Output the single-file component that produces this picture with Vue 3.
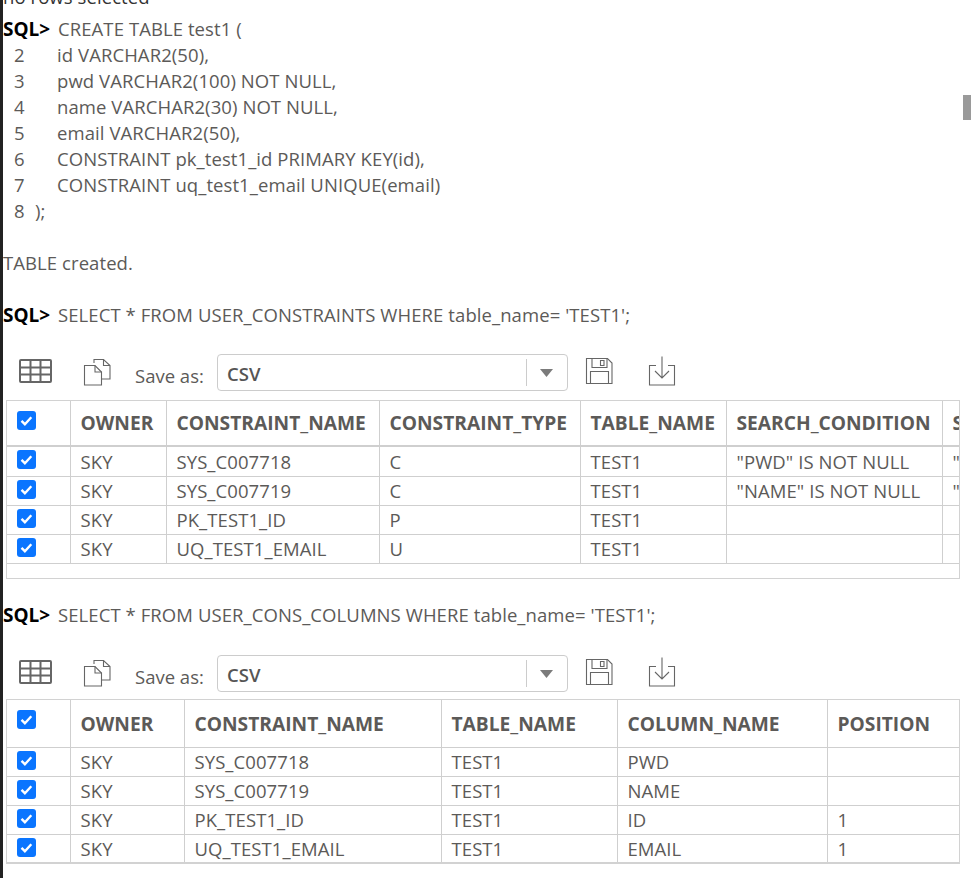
<script setup>
const lines = [
  ['2', 'id VARCHAR2(50),'],
  ['3', 'pwd VARCHAR2(100) NOT NULL,'],
  ['4', 'name VARCHAR2(30) NOT NULL,'],
  ['5', 'email VARCHAR2(50),'],
  ['6', 'CONSTRAINT pk_test1_id PRIMARY KEY(id),'],
  ['7', 'CONSTRAINT uq_test1_email UNIQUE(email)'],
]
const results = [
  {
    sql: "SELECT * FROM USER_CONSTRAINTS WHERE table_name= 'TEST1';",
    kind: 'first',
    cols: [63, 96, 213, 201, 146, 216, 41],
    head: ['OWNER', 'CONSTRAINT_NAME', 'CONSTRAINT_TYPE', 'TABLE_NAME', 'SEARCH_CONDITION', 'SEARCH_CONDITION_VC'],
    rows: [
      ['SKY', 'SYS_C007718', 'C', 'TEST1', '"PWD" IS NOT NULL', '"PWD" IS NOT NULL'],
      ['SKY', 'SYS_C007719', 'C', 'TEST1', '"NAME" IS NOT NULL', '"NAME" IS NOT NULL'],
      ['SKY', 'PK_TEST1_ID', 'P', 'TEST1', '', ''],
      ['SKY', 'UQ_TEST1_EMAIL', 'U', 'TEST1', '', ''],
    ],
  },
  {
    sql: "SELECT * FROM USER_CONS_COLUMNS WHERE table_name= 'TEST1';",
    kind: 'second',
    cols: [63, 114, 257, 176, 210, 132],
    head: ['OWNER', 'CONSTRAINT_NAME', 'TABLE_NAME', 'COLUMN_NAME', 'POSITION'],
    rows: [
      ['SKY', 'SYS_C007718', 'TEST1', 'PWD', ''],
      ['SKY', 'SYS_C007719', 'TEST1', 'NAME', ''],
      ['SKY', 'PK_TEST1_ID', 'TEST1', 'ID', '1'],
      ['SKY', 'UQ_TEST1_EMAIL', 'TEST1', 'EMAIL', '1'],
    ],
  },
]
</script>

<template>
  <div class="page">
    <div class="thumb"></div>
    <div class="line cut">no rows selected</div>
    <div class="line gap-top"><b class="prompt">SQL&gt;</b><span>CREATE TABLE test1 (</span></div>
    <div v-for="l in lines" :key="l[0]" class="line"><span class="num">{{ l[0] }}</span><span>{{ l[1] }}</span></div>
    <div class="line"><span class="num short">8</span><span>);</span></div>
    <div class="line created">TABLE created.</div>

    <section v-for="r in results" :key="r.kind" :class="['result', r.kind]">
      <div class="line"><b class="prompt">SQL&gt;</b><span>{{ r.sql }}</span></div>
      <div class="toolbar">
        <svg class="ic-grid" width="34" height="24" viewBox="0 0 34 24" fill="none" stroke="#666" stroke-width="2">
          <rect x="1" y="1" width="31" height="22" rx="1"/>
          <path d="M1 8.500h31M1 15.500h31M11.500 1v22M21.500 1v22"/>
        </svg>
        <svg class="ic-copy" width="28" height="28" viewBox="0 0 28 28" fill="none" stroke="#666" stroke-width="1.100">
          <path d="M11 5V1.500h9.500L27 7.500v13.500h-8"/>
          <path d="M20.500 1.500v6H27"/>
          <path d="M1.500 7.500h10.500l6.500 6.500v13H1.500z"/>
          <path d="M12 7.500v6.500h6.500"/>
        </svg>
        <span class="save-label">Save as:</span>
        <div class="select">
          <span class="select-text">CSV</span>
          <span class="select-div"></span>
          <svg width="13" height="8" viewBox="0 0 13 8"><path d="M0 0h13L6.500 8z" fill="#7b7b7b"/></svg>
        </div>
        <svg class="ic-save" width="28" height="28" viewBox="0 0 28 28" fill="none" stroke="#666" stroke-width="1.100">
          <path d="M1.500 1.500h21l4.500 4.500v20.500H1.500z"/>
          <path d="M7 1.500v9h15v-9"/>
          <path d="M5.500 26.500v-12h18v12"/>
          <path d="M15.500 3.500h3.500v5h-3.500z"/>
        </svg>
        <svg class="ic-down" width="28" height="30" viewBox="0 0 28 30" fill="none" stroke="#666" stroke-width="1.100">
          <path d="M8 9.500H1.500v19.500h25V9.500H20"/>
          <path d="M14 0.500v21M7 15l7 7 7-7"/>
        </svg>
      </div>
      <div class="grid-box">
        <table>
          <colgroup>
            <col v-for="(w, i) in r.cols" :key="i" :style="{ width: w + 'px' }">
          </colgroup>
          <thead>
            <tr>
              <th class="chk">
                <svg class="check" width="19" height="19" viewBox="0 0 19 19"><rect width="19" height="19" rx="3" fill="#0a75ff"/><path d="M4.500 9.800l3.400 3.400 6.400-7" fill="none" stroke="#fff" stroke-width="2.400"/></svg>
              </th>
              <th v-for="h in r.head" :key="h">{{ h }}</th>
            </tr>
          </thead>
          <tbody>
            <tr v-for="(row, ri) in r.rows" :key="ri">
              <td class="chk">
                <svg class="check" width="19" height="19" viewBox="0 0 19 19"><rect width="19" height="19" rx="3" fill="#0a75ff"/><path d="M4.500 9.800l3.400 3.400 6.400-7" fill="none" stroke="#fff" stroke-width="2.400"/></svg>
              </td>
              <td v-for="(c, ci) in row" :key="ci">{{ c }}</td>
            </tr>
          </tbody>
        </table>
      </div>
    </section>
  </div>
</template>

<style>
html, body { margin: 0; background: #fff; overflow: hidden; }
</style>

<style scoped>
.page {
  position: relative;
  box-sizing: border-box;
  height: 878px;
  overflow: hidden;
  border-left: 3px solid #222;
  background: #fff;
  font-family: "Open Sans", "Noto Sans", sans-serif;
  font-size: 18.5px;
  letter-spacing: 0.08px;
  color: #5c5a58;
}
.thumb {
  position: absolute;
  right: 0;
  top: 95px;
  width: 8px;
  height: 25px;
  background: #9a9a9a;
}
.line {
  display: flex;
  height: 26px;
  line-height: 26px;
  white-space: pre;
}
.cut { margin-top: -16px; color: #333; }
.gap-top { margin-top: 6px; }
.created { margin-top: 26px; }
.prompt {
  width: 55px;
  flex: none;
  color: #000;
  font-weight: 700;
  font-size: 19px;
  letter-spacing: 0;
}
.num {
  width: 43px;
  flex: none;
  padding-left: 11px;
}
.num.short { width: 21px; }
.result.first { margin-top: 26px; }
.result.second { margin-top: 23px; }
.toolbar {
  display: flex;
  align-items: flex-start;
  height: 37px;
  margin-top: 26px;
  margin-left: -3px;
}
.second .toolbar { margin-top: 27px; }
.ic-grid { margin: 5px 0 0 19px; flex: none; }
.ic-copy { margin: 4px 0 0 30px; flex: none; }
.save-label { margin: 9px 0 0 24px; width: 82px; flex: none; line-height: 26px; letter-spacing: 0; }
.select {
  box-sizing: border-box;
  width: 351px;
  height: 37px;
  flex: none;
  display: flex;
  align-items: center;
  border: 1px solid #ccc;
  border-radius: 4px;
}
.select-text { width: 308px; padding: 1px 0 0 9px; box-sizing: border-box; font-weight: 600; color: #555; }
.select-div { width: 1px; height: 27px; background: #ccc; margin-right: 13px; }
.ic-save { margin: 3px 0 0 17px; flex: none; }
.ic-down { margin: 2px 0 0 35px; flex: none; }
.grid-box {
  box-sizing: border-box;
  width: 954px;
  margin-left: 3px;
  margin-top: 9px;
  border: 1px solid #d2d2d2;
  overflow: hidden;
}
.second .grid-box { margin-top: 7px; }
.first .grid-box { height: 179px; }
.second .grid-box { height: 165px; border-bottom-width: 2px; }
table {
  border-collapse: collapse;
  table-layout: fixed;
  width: 976px;
}
.second table { width: 952px; }
th, td {
  padding: 0 0 0 10px;
  border-right: 1px solid #cfcfcf;
  border-bottom: 1px solid #cfcfcf;
  text-align: left;
  white-space: nowrap;
  overflow: hidden;
  height: 28px;
  line-height: 26px;
  font-weight: 400;
}
th {
  height: 44px;
  font-weight: 700;
  font-size: 19.2px;
  letter-spacing: 0;
}
.first th { border-bottom-width: 2px; }
.first tbody tr:first-child td { height: 29px; }
.second th { height: 47px; }
.second th:last-child, .second td:last-child { border-right: 0; }
.chk { vertical-align: top; padding-left: 10px; }
.check { display: block; }
th.chk .check { margin-top: 10px; }
td.chk .check { margin-top: 3px; }
</style>
